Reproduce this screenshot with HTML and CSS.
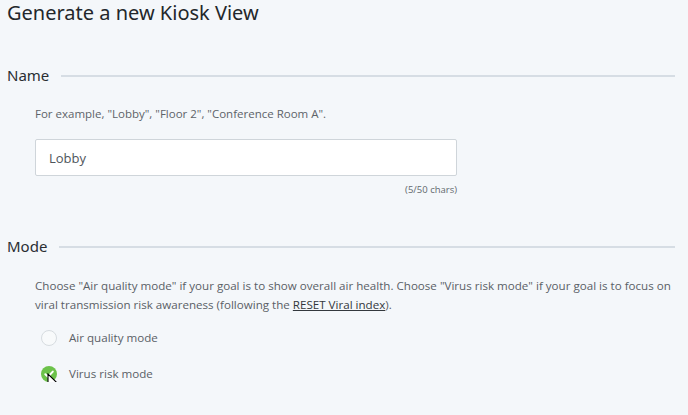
FILE: index.html
```html
<!DOCTYPE html>
<html lang="en">
<head>
<meta charset="utf-8">
<title>Generate a new Kiosk View</title>
<link rel="stylesheet" href="styles.css">
</head>
<body>
<div class="page">
  <h1 class="title">Generate a new Kiosk View</h1>

  <section class="section section-name">
    <div class="section-head">
      <h2 class="section-title">Name</h2>
      <span class="section-rule"></span>
    </div>
    <div class="section-body">
      <p class="hint">For example, "Lobby", "Floor 2", "Conference Room A".</p>
      <div class="field">
        <input class="text-input" type="text" value="Lobby">
        <div class="counter">(5/50 chars)</div>
      </div>
    </div>
  </section>

  <section class="section section-mode">
    <div class="section-head">
      <h2 class="section-title">Mode</h2>
      <span class="section-rule"></span>
    </div>
    <div class="section-body">
      <p class="desc">Choose "Air quality mode" if your goal is to show overall air health. Choose "Virus risk mode" if your goal is to focus on viral transmission risk awareness (following the <a class="link" href="#">RESET Viral index</a>).</p>
      <div class="options">
        <label class="option">
          <span class="radio"></span>
          <span class="option-label">Air quality mode</span>
        </label>
        <label class="option option-checked">
          <span class="radio radio-checked">
            <svg class="check" width="16" height="16" viewBox="0 0 16 16"><path d="M4.3 8.2 L7 10.8 L11.8 5.6" fill="none" stroke="#fff" stroke-width="2" stroke-linecap="round" stroke-linejoin="round"/></svg>
            <svg class="cursor" width="13" height="19" viewBox="0 0 13 19"><path d="M1 1 L1 15 L4.3 11.9 L6.6 17.4 L8.9 16.4 L6.7 11 L11.2 11 Z" fill="#fff" stroke="#000" stroke-width="1.1" stroke-linejoin="miter"/></svg>
          </span>
          <span class="option-label">Virus risk mode</span>
        </label>
      </div>
    </div>
  </section>
</div>
</body>
</html>
```

FILE: styles.css
```css
html, body {
  margin: 0;
  padding: 0;
  background: #f4f7fa;
}

body {
  font-family: "Open Sans", "Noto Sans", sans-serif;
  color: #555b61;
}

.page {
  padding: 1px 13px 0 7px;
}

.title {
  margin: 0;
  font-family: "Noto Sans", "Open Sans", sans-serif;
  font-size: 20px;
  line-height: 24px;
  font-weight: 400;
  color: #23272b;
}

.section-name {
  margin-top: 40px;
}

.section-mode {
  margin-top: 39px;
}

.section-head {
  display: flex;
  align-items: center;
  gap: 12px;
}

.section-title {
  margin: 0;
  font-family: "Noto Sans", "Open Sans", sans-serif;
  font-size: 15px;
  line-height: 20px;
  font-weight: 400;
  color: #2a2e33;
}

.section-rule {
  flex: 1;
  height: 2px;
  background: #d6dde4;
  margin-top: 2px;
}

.section-body {
  padding-left: 28px;
  padding-right: 2px;
}

.hint {
  margin: 21px 0 0;
  font-size: 11.5px;
  line-height: 16px;
  color: #5d6369;
}

.field {
  width: 422px;
  margin-top: 17px;
}

.text-input {
  display: block;
  box-sizing: border-box;
  width: 100%;
  height: 37px;
  margin: 0;
  padding: 0 13px;
  border: 1px solid #cfd5da;
  border-radius: 2px;
  background: #fff;
  font-family: "Open Sans", sans-serif;
  font-size: 13px;
  color: #4f555b;
  outline: none;
}

.counter {
  margin-top: 7px;
  text-align: right;
  font-size: 9.5px;
  line-height: 14px;
  color: #62686e;
}

.desc {
  margin: 20px 0 0;
  font-size: 11.6px;
  line-height: 19px;
  color: #5a6066;
}

.link {
  color: #33383d;
  text-decoration: underline;
}

.options {
  display: flex;
  flex-direction: column;
  gap: 19.5px;
  margin-top: 16px;
  padding-left: 6px;
}

.option {
  display: flex;
  align-items: center;
  gap: 12px;
  font-size: 11.6px;
  line-height: 16px;
  color: #5a6066;
}

.radio {
  position: relative;
  box-sizing: border-box;
  width: 16px;
  height: 16px;
  border-radius: 50%;
  border: 1px solid #d7dce0;
  background: #f8fafb;
  flex: none;
}

.radio-checked {
  border: none;
  background: #6cc24a;
}

.check {
  position: absolute;
  left: 0;
  top: 0;
}

.cursor {
  position: absolute;
  left: 6px;
  top: 7px;
}
```
